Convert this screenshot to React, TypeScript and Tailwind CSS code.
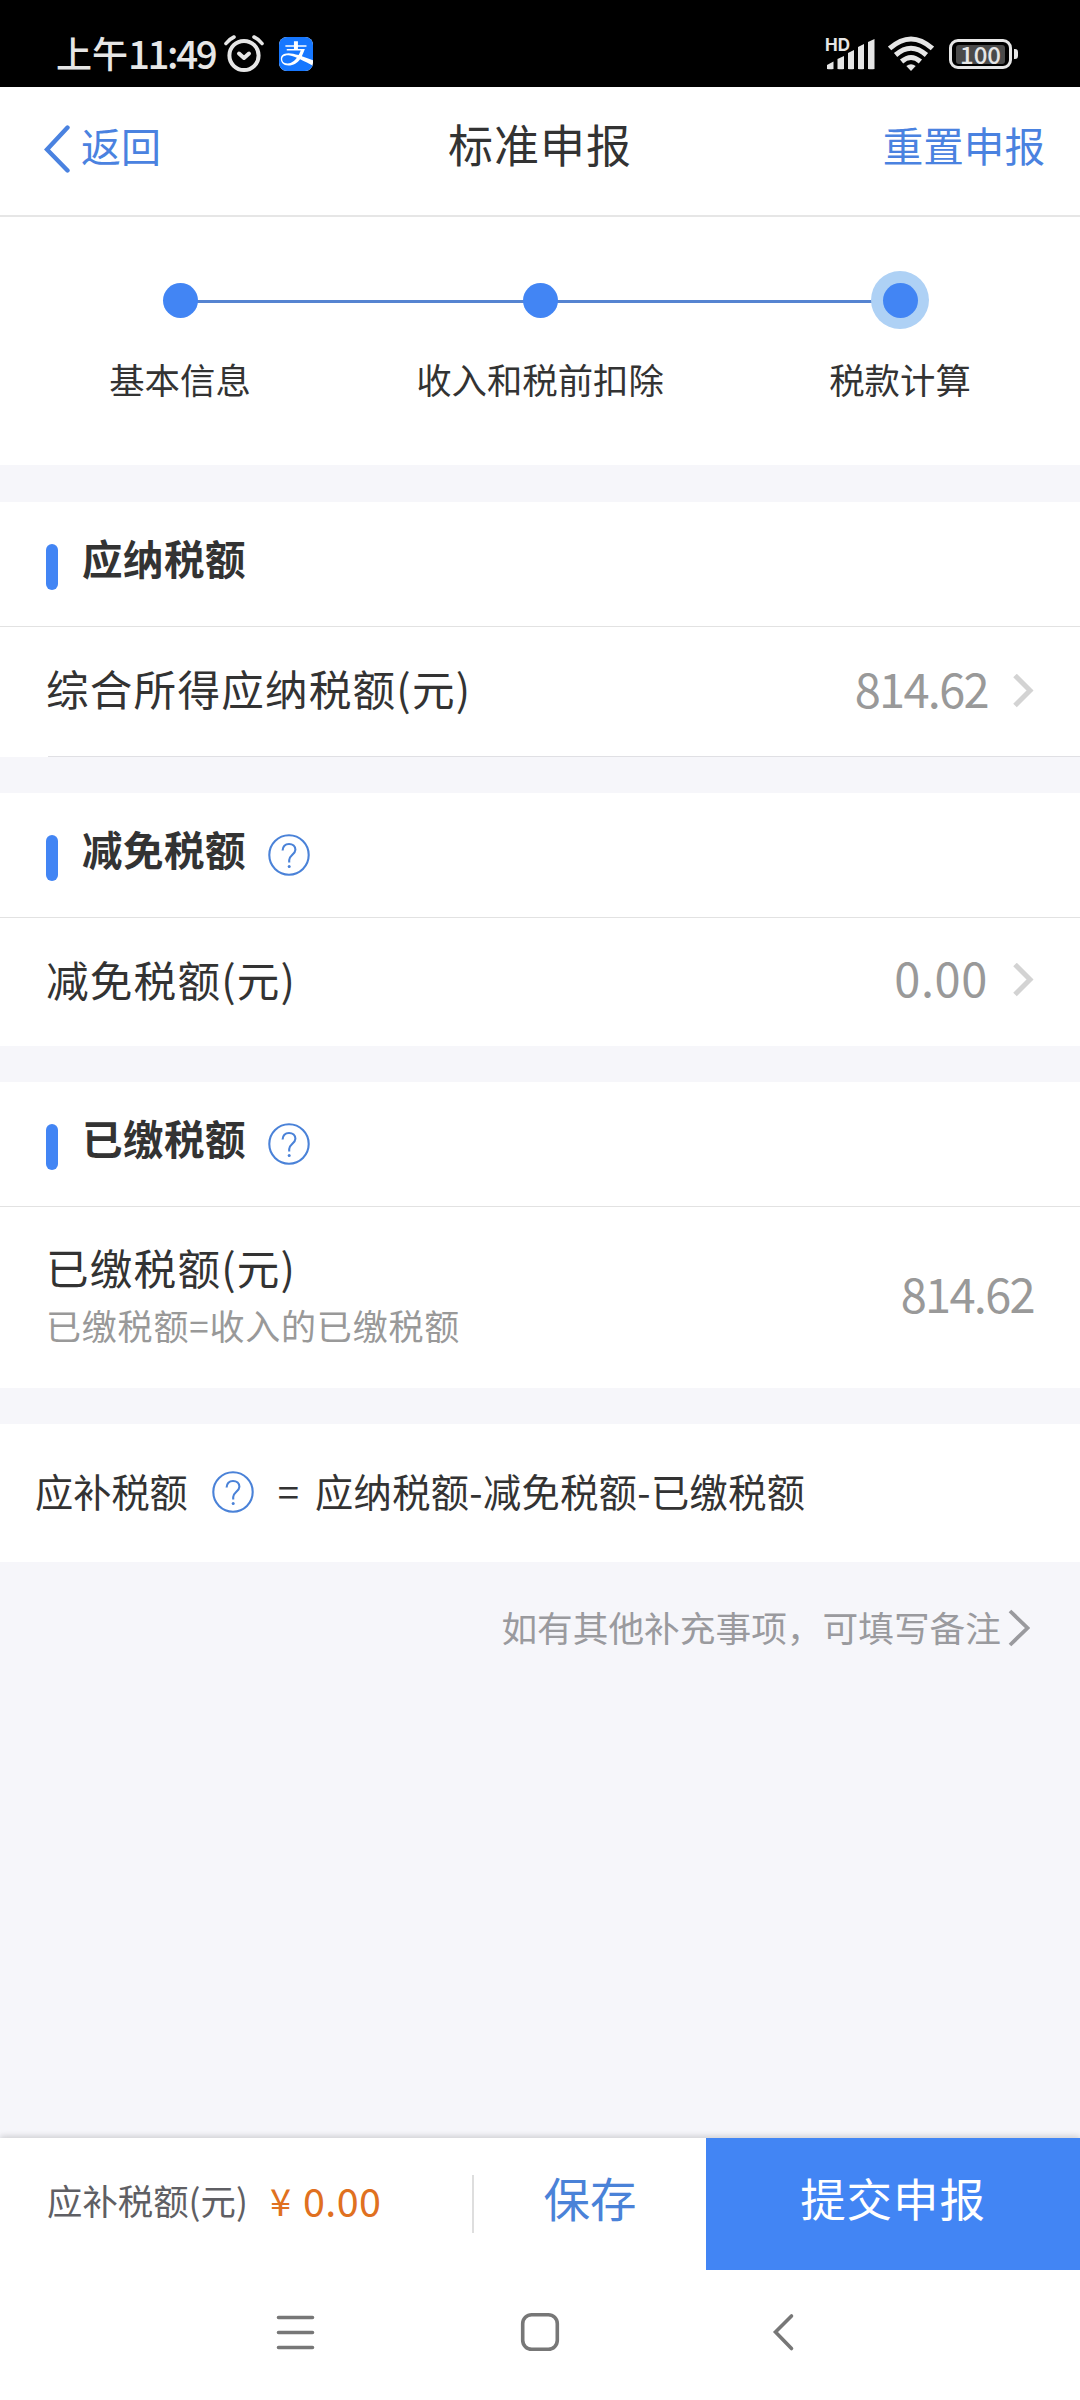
import { FaAlipay } from "react-icons/fa";

interface Step {
  label: string;
  active?: boolean;
}

const steps: Step[] = [{ label: "基本信息" }, { label: "收入和税前扣除" }, { label: "税款计算", active: true }];

export default function App() {
  return (
    <div className="flex h-[2400px] w-[1080px] flex-col overflow-hidden bg-[#f6f6fa] font-['Noto_Sans_CJK_SC',sans-serif] text-[#333333]">
      <StatusBar />
      <Header />
      <Stepper />

      <main className="flex flex-1 flex-col">
        <section className="mt-[37px] bg-white">
          <SectionTitle title="应纳税额" />
          <div className="flex h-[129px] items-center justify-between pr-[46px] pl-[46px]">
            <RowLabel text="综合所得应纳税额(元)" />
            <div className="flex items-center pb-[2px]">
              <Amount value="814.62" />
              <ChevronRight />
            </div>
          </div>
          <div className="ml-[48px] h-px bg-[#e0e0e4]" />
        </section>

        <section className="mt-[36px] bg-white">
          <SectionTitle title="减免税额" help />
          <div className="flex h-[128px] items-center justify-between pr-[46px] pl-[46px]">
            <RowLabel text="减免税额(元)" />
            <div className="flex items-center pb-[4px]">
              <Amount value="0.00" wide />
              <ChevronRight />
            </div>
          </div>
        </section>

        <section className="mt-[36px] bg-white">
          <SectionTitle title="已缴税额" help />
          <div className="flex h-[181px] items-center justify-between pr-[46px] pl-[46px]">
            <div className="flex flex-col pb-[8px]">
              <RowLabel text="已缴税额(元)" />
              <span className="-mt-[5px] text-[35px] leading-[52px] tracking-[0.8px] text-[#999999]">已缴税额=收入的已缴税额</span>
            </div>
            <div className="flex items-center pb-[3px]">
              <Amount value="814.62" />
            </div>
          </div>
        </section>

        <section className="mt-[36px] flex h-[138px] items-center bg-white pl-[35px] text-[38.2px] leading-[56px]">
          <span className="pb-[5px]">应补税额</span>
          <HelpIcon className="mr-[24px] mb-[3px] ml-[24px]" />
          <span className="mr-[16px] pb-[4px]">=</span>
          <span className="pb-[5px] tracking-[0.4px]">应纳税额-减免税额-已缴税额</span>
        </section>

        <div className="mt-[39px] flex items-center justify-end pr-[50px] text-[#9a9a9e]">
          <span className="text-[35.7px] leading-[52px]">如有其他补充事项，可填写备注</span>
          <svg className="mt-[2px] ml-[7px] h-[38px] w-[22px]" viewBox="0 0 22 38" fill="none" stroke="currentColor" strokeWidth="3.8">
            <path d="M2 2 L19.5 19 L2 36" />
          </svg>
        </div>
      </main>

      <SubmitBar />
      <SystemNav />
    </div>
  );
}

function StatusBar() {
  return (
    <div className="flex h-[87px] items-center justify-between bg-black pr-[62px] pl-[56px] text-[#e6e6e6]">
      <div className="flex items-center pt-[20px]">
        <span className="flex items-center pb-[3px] font-medium">
          <span className="text-[36px] leading-[44px]">上午</span>
          <span className="text-[38.5px] leading-[44px] tracking-[-2.4px]">11:49</span>
        </span>
        <svg className="ml-[9px] h-[38px] w-[40px]" viewBox="0 0 40 38" fill="none" stroke="currentColor">
          <circle cx="20" cy="20.5" r="14.6" strokeWidth="4" />
          <path d="M15 18.5 L20 23 L25 18.5" strokeWidth="4" strokeLinecap="round" strokeLinejoin="round" />
          <path d="M2 8.5 Q5.5 4 10 2 M38 8.5 Q34.5 4 30 2" strokeWidth="3.6" strokeLinecap="round" />
        </svg>
        <span className="ml-[15px] flex h-[34px] w-[34px] items-center justify-center overflow-hidden rounded-[8px] bg-white">
          <FaAlipay className="h-[40px] w-[36px] shrink-0 text-[#1677ff]" />
        </span>
      </div>

      <div className="flex items-center pt-[21px]">
        <div className="relative h-[32px] w-[50px]">
          <span className="absolute top-0 left-0 font-['Inter',sans-serif] text-[17px] leading-[14px] font-bold">HD</span>
          <svg className="h-[32px] w-[50px]" viewBox="0 0 50 32" fill="currentColor">
            <path d="M2 27 L8.5 23.5 V31 Q5 31.5 2 31 Z" />
            <path d="M12.5 21 L19 18 V31 Q16 31.5 12.5 31 Z" />
            <path d="M23 15 L29 12 V31 Q26 31.5 23 31 Z" />
            <path d="M33 9 L39 6 V31 Q36 31.5 33 31 Z" />
            <path d="M43 4 L49.5 1 V31 Q46 31.5 43 31 Z" />
          </svg>
        </div>
        <svg className="ml-[13px] h-[36px] w-[46px]" viewBox="0 0 46 36" fill="none" stroke="currentColor" strokeWidth="5">
          <path d="M1.6 12.5 Q23 -6.5 44.4 12.5" />
          <path d="M7.6 19 Q23 5.5 38.4 19" />
          <path d="M13.6 25.5 Q23 17.5 32.4 25.5" />
          <path d="M23 35 L18.3 30 Q23 26.5 27.7 30 Z" fill="currentColor" stroke="none" />
        </svg>
        <div className="ml-[15px] flex h-[30px] w-[63px] items-center justify-center rounded-[9px] border-[3px] border-current">
          <span className="flex h-[19px] w-[49px] items-center justify-center rounded-[3px] bg-[#4a4a4a] pb-[2px] text-[24px] leading-[19px] font-medium">
            100
          </span>
        </div>
        <span className="ml-[2px] h-[10px] w-[4px] rounded-r-[3px] bg-current" />
      </div>
    </div>
  );
}

function Header() {
  return (
    <header className="grid h-[130px] grid-cols-3 items-center border-b-2 border-[#e6e6e6] bg-white pb-[12px]">
      <button className="flex items-center pl-[44px] text-[#4a82e0]">
        <svg className="mt-[7px] mr-[10px] h-[48px] w-[27px]" viewBox="0 0 27 48" fill="none" stroke="currentColor" strokeWidth="4.4">
          <path d="M23.5 2.5 L3 24.5 L23.5 45.5" strokeLinecap="round" />
        </svg>
        <span className="text-[40px] leading-[56px]">返回</span>
      </button>
      <h1 className="pb-[2px] text-center text-[45px] leading-[60px] tracking-[1px]">标准申报</h1>
      <button className="pr-[35px] text-right text-[40.6px] leading-[56px] text-[#4a82e0]">重置申报</button>
    </header>
  );
}

function Stepper() {
  return (
    <div className="h-[248px] bg-white pt-[54px]">
      <div className="relative grid grid-cols-3">
        <div className="absolute top-[29px] right-[180px] left-[180px] h-[3px] bg-[#5684d1]" />
        {steps.map((step) => (
          <div key={step.label} className="relative flex flex-col items-center">
            <div
              className={
                step.active
                  ? "flex h-[58px] w-[58px] items-center justify-center rounded-full bg-[#aed1f5]"
                  : "flex h-[58px] w-[58px] items-center justify-center"
              }
            >
              <div className="h-[35px] w-[35px] rounded-full bg-[#4285f4]" />
            </div>
            <span className="mt-[24px] text-[35.4px] leading-[52px]">{step.label}</span>
          </div>
        ))}
      </div>
    </div>
  );
}

function SectionTitle({ title, help = false }: { title: string; help?: boolean }) {
  return (
    <div className="flex h-[125px] items-start border-b border-[#e2e2e2] pl-[46px]">
      <div className="mt-[42px] h-[46px] w-[12px] rounded-full bg-[#4285f4]" />
      <h2 className="mt-[28px] ml-[24px] text-[40.5px] leading-[56px] font-bold tracking-[0.5px]">{title}</h2>
      {help ? <HelpIcon className="mt-[41px] ml-[22px]" /> : null}
    </div>
  );
}

function RowLabel({ text }: { text: string }) {
  return <span className="pb-[7px] text-[42.6px] leading-[60px] tracking-[1.2px]">{text}</span>;
}

function HelpIcon({ className }: { className: string }) {
  return (
    <svg className={`h-[42px] w-[42px] shrink-0 text-[#4a82d8] ${className}`} viewBox="0 0 42 42" fill="none" stroke="currentColor">
      <circle cx="21" cy="21" r="19.7" strokeWidth="2.1" />
      <path
        d="M14.6 16.6 C14.6 12.4 17.2 10 21 10 C24.8 10 27.4 12.4 27.4 15.8 C27.4 20.2 21.2 21.4 21.2 26 V28.6"
        strokeWidth="2.1"
      />
      <circle cx="21.2" cy="32.4" r="1.5" fill="currentColor" stroke="none" />
    </svg>
  );
}

function Amount({ value, wide = false }: { value: string; wide?: boolean }) {
  return (
    <span
      className={
        wide
          ? "pb-[6px] text-[47px] leading-[60px] tracking-[0.6px] text-[#999999]"
          : "pb-[6px] text-[47px] leading-[60px] tracking-[-1.7px] text-[#999999]"
      }
    >
      {value}
    </span>
  );
}

function ChevronRight() {
  return (
    <svg className="ml-[25px] h-[34px] w-[21px]" viewBox="0 0 21 34" fill="none" stroke="#d3d3d3" strokeWidth="5">
      <path d="M2 1.5 L17 16.5 L2 31.5" />
    </svg>
  );
}

function SubmitBar() {
  return (
    <div className="relative flex h-[132px] items-center bg-white shadow-[0_-2px_6px_rgba(0,0,0,0.16)]">
      <div className="flex w-[472px] items-center pb-[8px] pl-[47px]">
        <span className="text-[35.4px] leading-[52px] text-[#5f5f64]">应补税额(元)</span>
        <span className="ml-[22px] text-[38px] leading-[52px] text-[#e07020]">¥</span>
        <span className="ml-[12px] text-[39.5px] leading-[52px] tracking-[0.4px] text-[#e07020]">0.00</span>
      </div>
      <div className="h-[58px] w-[2px] bg-[#dedede]" />
      <button className="flex-1 pb-[14px] text-center text-[46.5px] leading-[60px] text-[#4a82d8]">保存</button>
      <button className="h-[132px] w-[374px] bg-[#4285f4] pb-[14px] text-center text-[45.5px] leading-[60px] tracking-[0.9px] text-white">
        提交申报
      </button>
    </div>
  );
}

function SystemNav() {
  return (
    <nav className="relative flex h-[130px] items-start bg-white pt-[42px] pl-[276px] text-[#777777]">
      <svg className="h-[40px] w-[39px]" viewBox="0 0 39 40" fill="none" stroke="currentColor" strokeWidth="3.6" strokeLinecap="round">
        <path d="M2.5 5.5 H36.5 M2.5 20.5 H36.5 M2.5 35.5 H36.5" />
      </svg>
      <svg className="ml-[205px] h-[40px] w-[40px]" viewBox="0 0 40 40" fill="none" stroke="currentColor" strokeWidth="3.6">
        <rect x="2.7" y="2.7" width="34.6" height="34.6" rx="9" />
      </svg>
      <svg className="ml-[212px] h-[40px] w-[24px]" viewBox="0 0 24 40" fill="none" stroke="currentColor" strokeWidth="3.6">
        <path d="M19.5 4 L3.5 20 L19.5 36.5" strokeLinecap="round" />
      </svg>
    </nav>
  );
}
